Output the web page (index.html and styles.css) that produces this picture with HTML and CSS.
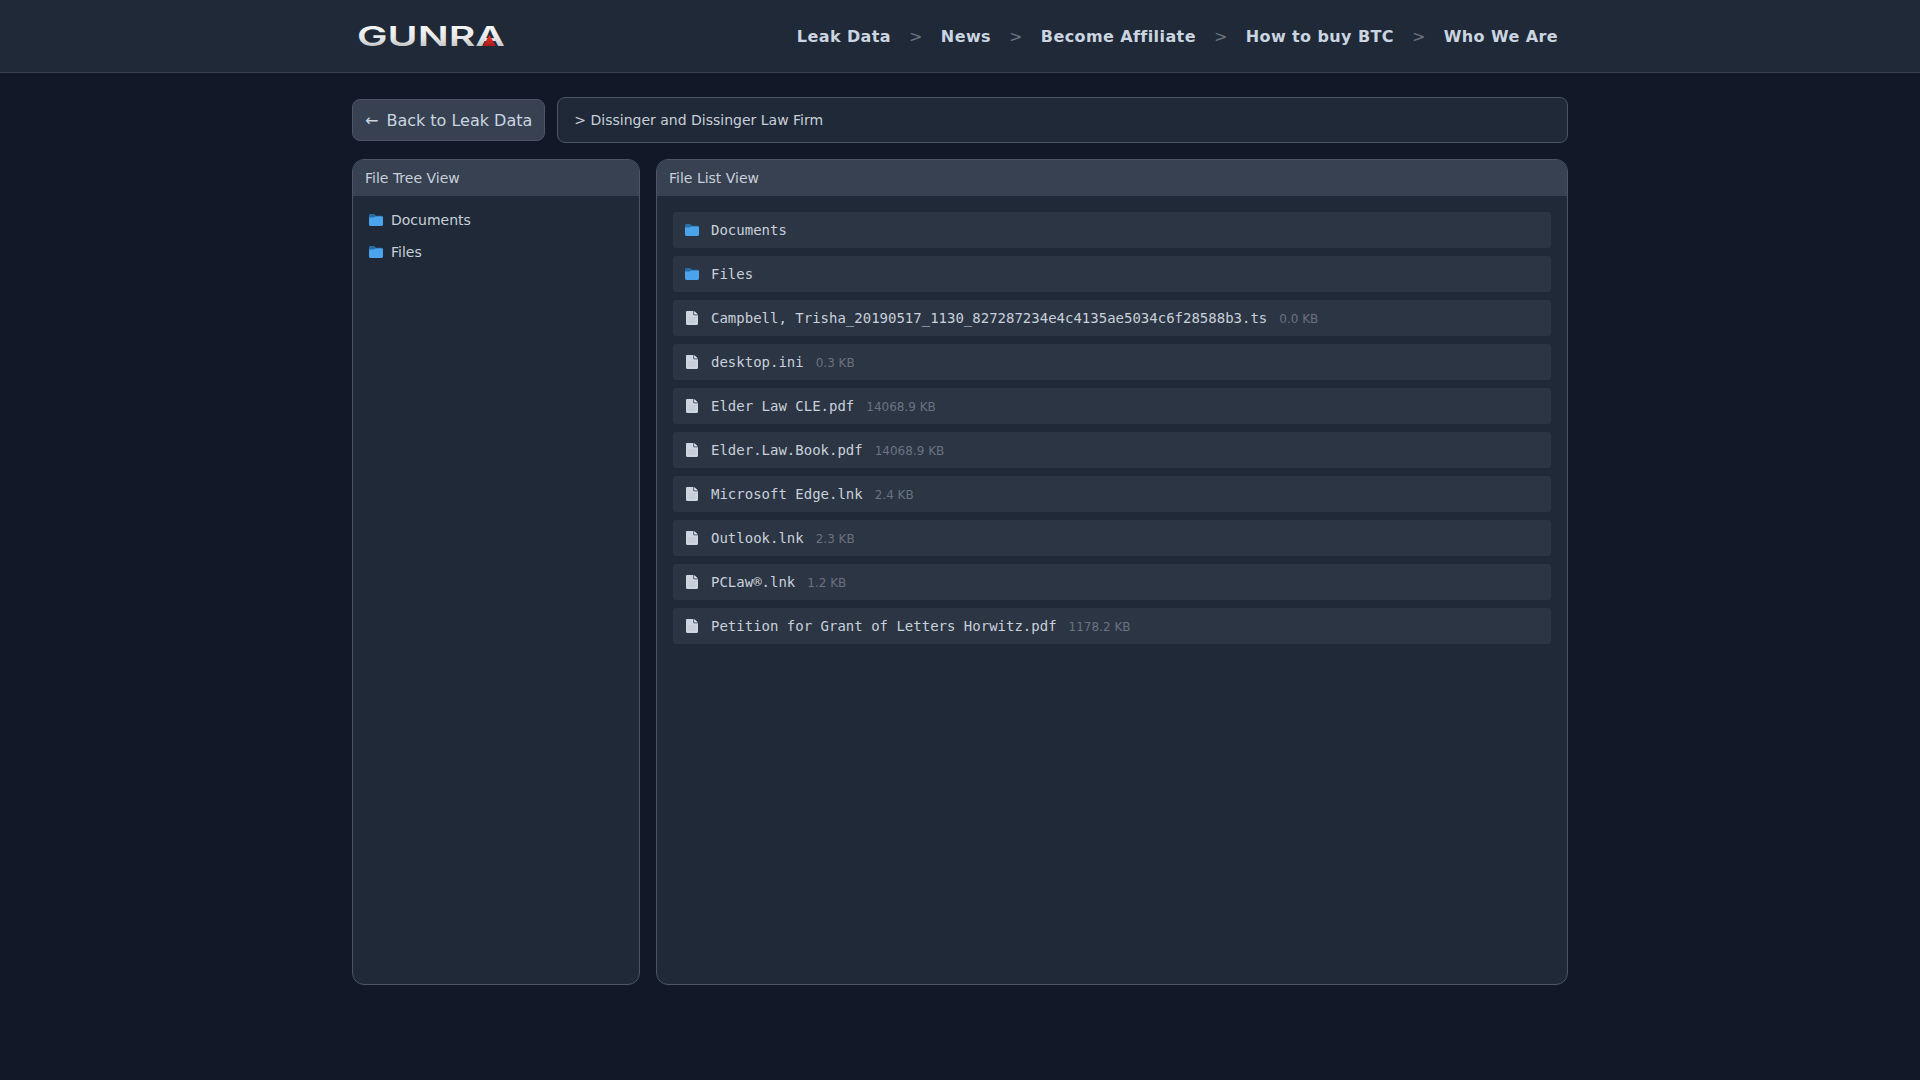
FILE: index.html
```html
<!DOCTYPE html>
<html lang="en">
<head>
<meta charset="utf-8">
<title>Gunra</title>
<link rel="stylesheet" href="styles.css">
</head>
<body>
<svg class="sprite" width="0" height="0" aria-hidden="true">
  <defs>
    <symbol id="folder" viewBox="0 0 14 12">
      <path fill="#2a6ea8" d="M0 1.400C0 .6.6 0 1.400 0h3.200c.4 0 .7.1 1 .4L7 1.800h5.600c.8 0 1.400.6 1.400 1.400v1H0z"/>
      <path fill="#4ba3eb" d="M0 3.400h4.800l1.400-.9h6.400c.8 0 1.400.6 1.400 1.400v6.700c0 .8-.6 1.400-1.400 1.400H1.400C.6 12 0 11.400 0 10.600z"/>
    </symbol>
    <symbol id="file" viewBox="0 0 12 14">
      <path fill="#cdd5df" d="M1.200 0H7.400V3.400c0 .5.4.9.9.9H12v8.500c0 .7-.5 1.200-1.200 1.200H1.200C.5 14 0 13.500 0 12.800V1.200C0 .5.500 0 1.200 0z"/>
      <path fill="#e2e8f0" d="M8.200 0 12 3.600H8.800c-.4 0-.6-.2-.6-.6z"/>
      <path stroke="#bcc5d1" stroke-width=".8" d="M2.500 7h7M2.500 9h7M2.500 11h7"/>
    </symbol>
  </defs>
</svg>
<header class="topbar">
  <div class="topbar-inner">
    <a class="logo" href="#" aria-label="GUNRA">
      <svg class="logo-mark" width="150" height="24" viewBox="0 0 150 24">
        <defs>
          <linearGradient id="chrome" x1="0" y1="0" x2="0" y2="1">
            <stop offset="0" stop-color="#ffffff"/>
            <stop offset=".55" stop-color="#e6e6e6"/>
            <stop offset="1" stop-color="#a9abae"/>
          </linearGradient>
          <linearGradient id="red" x1="0" y1="0" x2="0" y2="1">
            <stop offset="0" stop-color="#ee3a2e"/>
            <stop offset="1" stop-color="#a81a1c"/>
          </linearGradient>
        </defs>
        <text class="logo-text" x="0" y="22" textLength="148" lengthAdjust="spacingAndGlyphs" fill="url(#chrome)">GUNRA</text>
        <polygon points="126,22 139,22 132.500,11" fill="url(#red)"/>
      </svg>
    </a>
    <nav class="nav">
      <a href="#">Leak Data</a><span class="sep">&gt;</span>
      <a href="#">News</a><span class="sep">&gt;</span>
      <a href="#">Become Affiliate</a><span class="sep">&gt;</span>
      <a href="#">How to buy BTC</a><span class="sep">&gt;</span>
      <a href="#">Who We Are</a>
    </nav>
  </div>
</header>
<main class="page">
  <div class="toolbar">
    <a class="back" href="#"><span>←</span><span>Back to Leak Data</span></a>
    <div class="crumb">&gt; Dissinger and Dissinger Law Firm</div>
  </div>
  <div class="panels">
    <section class="panel tree">
      <h2 class="panel-title">File Tree View</h2>
      <ul class="tree-list">
        <li class="tree-item"><svg class="ico"><use href="#folder"/></svg>Documents</li>
        <li class="tree-item"><svg class="ico"><use href="#folder"/></svg>Files</li>
      </ul>
    </section>
    <section class="panel list">
      <h2 class="panel-title">File List View</h2>
      <ul class="file-list">
        <li class="row"><svg class="ico"><use href="#folder"/></svg><span class="name">Documents</span></li>
        <li class="row"><svg class="ico"><use href="#folder"/></svg><span class="name">Files</span></li>
        <li class="row"><svg class="ico"><use href="#file"/></svg><span class="name">Campbell, Trisha_20190517_1130_827287234e4c4135ae5034c6f28588b3.ts</span><span class="size">0.0 KB</span></li>
        <li class="row"><svg class="ico"><use href="#file"/></svg><span class="name">desktop.ini</span><span class="size">0.3 KB</span></li>
        <li class="row"><svg class="ico"><use href="#file"/></svg><span class="name">Elder Law CLE.pdf</span><span class="size">14068.9 KB</span></li>
        <li class="row"><svg class="ico"><use href="#file"/></svg><span class="name">Elder.Law.Book.pdf</span><span class="size">14068.9 KB</span></li>
        <li class="row"><svg class="ico"><use href="#file"/></svg><span class="name">Microsoft Edge.lnk</span><span class="size">2.4 KB</span></li>
        <li class="row"><svg class="ico"><use href="#file"/></svg><span class="name">Outlook.lnk</span><span class="size">2.3 KB</span></li>
        <li class="row"><svg class="ico"><use href="#file"/></svg><span class="name">PCLaw®.lnk</span><span class="size">1.2 KB</span></li>
        <li class="row"><svg class="ico"><use href="#file"/></svg><span class="name">Petition for Grant of Letters Horwitz.pdf</span><span class="size">1178.2 KB</span></li>
      </ul>
    </section>
  </div>
</main>
</body>
</html>
```
FILE: styles.css
```css
* { box-sizing: border-box; }
html, body { margin: 0; padding: 0; }
body {
  min-height: 100vh;
  background: #111827;
  color: #c9d0da;
  font-family: "DejaVu Sans", sans-serif;
  font-size: 14px;
}
a { color: inherit; text-decoration: none; }
ul { list-style: none; margin: 0; padding: 0; }
.sprite { position: absolute; }

.topbar {
  height: 73px;
  background: #1f2937;
  border-bottom: 1px solid #374151;
}
.topbar-inner {
  width: 1216px;
  height: 72px;
  margin: 0 auto;
  display: flex;
  align-items: center;
  justify-content: space-between;
  padding: 0 10px 0 5px;
}
.logo { display: flex; }
.logo-mark { overflow: visible; }
.logo-text {
  font-family: Inter, "DejaVu Sans", sans-serif;
  font-weight: 600;
  font-size: 27px;
}
.nav {
  display: flex;
  align-items: center;
  gap: 18px;
  font-size: 16px;
  font-weight: 700;
  letter-spacing: 0.4px;
  color: #cbd5e0;
}
.sep { color: #6b7280; font-weight: 400; }

.page {
  width: 1216px;
  margin: 0 auto;
  padding-top: 24px;
}
.toolbar {
  display: flex;
  align-items: center;
  gap: 12px;
  margin-bottom: 16px;
}
.back {
  height: 42px;
  display: flex;
  align-items: center;
  gap: 8px;
  padding: 0 12px;
  background: #374151;
  border: 1px solid #4b5563;
  border-radius: 8px;
  font-size: 16px;
  color: #cbd5e0;
  white-space: nowrap;
}
.crumb {
  flex: 1;
  height: 46px;
  display: flex;
  align-items: center;
  padding: 0 16px;
  background: #1f2937;
  border: 1px solid #4b5563;
  border-radius: 8px;
  font-size: 14px;
  color: #c9d0da;
}
.panels {
  display: flex;
  gap: 16px;
  height: 826px;
}
.panel {
  background: #1f2937;
  border: 1px solid #4b5563;
  border-radius: 12px;
  overflow: hidden;
}
.tree { width: 288px; flex: none; }
.list { flex: 1; }
.panel-title {
  margin: 0;
  height: 36px;
  display: flex;
  align-items: center;
  padding: 0 12px;
  background: #374151;
  font-size: 14px;
  font-weight: 400;
  color: #c9d0da;
}
.ico { width: 14px; height: 14px; flex: none; margin-right: 8px; }
.tree-list { padding: 8px; }
.tree-item {
  height: 32px;
  display: flex;
  align-items: center;
  padding: 0 8px;
  color: #c9d0da;
}
.file-list {
  padding: 16px;
  display: flex;
  flex-direction: column;
  gap: 8px;
}
.row {
  height: 36px;
  display: flex;
  align-items: center;
  padding: 0 12px;
  background: #2b3544;
  border-radius: 4px;
}
.row .ico { margin-right: 12px; }
.name {
  font-family: "DejaVu Sans Mono", monospace;
  font-size: 14px;
  color: #c9d0da;
}
.size {
  margin-left: 12px;
  padding-top: 2px;
  font-size: 12px;
  color: #6b7280;
}
```
